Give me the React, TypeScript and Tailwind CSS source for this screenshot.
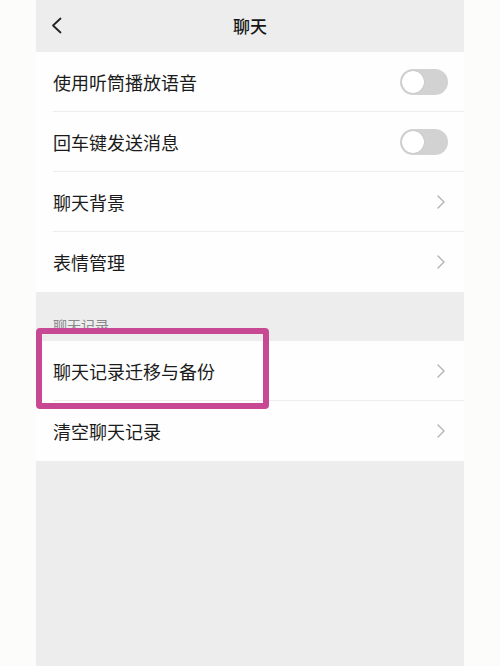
import React from 'react';

const font = { fontFamily: '"Noto Sans CJK SC", "Noto Sans", sans-serif' };

const Toggle: React.FC = () => (
  <div className="w-[48px] h-[26px] rounded-full bg-[#d2d2d2] p-[2px] flex items-center">
    <div className="w-[22px] h-[22px] rounded-full bg-white shadow-[0_0_1px_rgba(0,0,0,0.25)]" />
  </div>
);

const Chevron: React.FC = () => (
  <svg width="8" height="14" viewBox="0 0 8 14" fill="none" className="mr-[19px]">
    <path d="M1 1l6 6-6 6" stroke="#b4b4b4" strokeWidth="1.4" strokeLinecap="round" strokeLinejoin="round" />
  </svg>
);

interface RowProps {
  label: string;
  toggle?: boolean;
  last?: boolean;
}

const Row: React.FC<RowProps> = ({ label, toggle, last }) => (
  <div className="bg-[#fefefe] pl-[17px]">
    <div
      className={`h-[60px] flex items-center justify-between ${last ? '' : 'border-b border-[#ededed]'}`}
    >
      <span className="text-[18px] text-[#1b1b1b] leading-none">{label}</span>
      {toggle ? (
        <div className="mr-[16px]">
          <Toggle />
        </div>
      ) : (
        <Chevron />
      )}
    </div>
  </div>
);

export default function App() {
  return (
    <div className="w-full h-[666px] bg-[#fcfcfa] px-[36px] overflow-hidden" style={font}>
      <div className="relative w-[428px] h-full bg-[#ededed] flex flex-col">
        {/* Header */}
        <div className="h-[52px] flex items-center justify-center relative">
          <svg
            width="11"
            height="17"
            viewBox="0 0 11 17"
            fill="none"
            className="absolute left-[15px] top-[17px]"
          >
            <path d="M9.5 1.5L2 8.5l7.5 7" stroke="#222" strokeWidth="1.8" strokeLinecap="round" strokeLinejoin="round" />
          </svg>
          <span className="text-[17px] font-medium text-[#161616]">聊天</span>
        </div>

        <Row label="使用听筒播放语音" toggle />
        <Row label="回车键发送消息" toggle />
        <Row label="聊天背景" />
        <Row label="表情管理" last />

        <div className="h-[49px] pl-[17px] flex items-end pb-[9px]">
          <span className="text-[14px] text-[#8a8a8a] leading-none">聊天记录</span>
        </div>

        <Row label="聊天记录迁移与备份" />
        <Row label="清空聊天记录" last />

        {/* highlight box */}
        <div className="absolute left-0 top-[328px] w-[233px] h-[81px] border-[6.5px] border-[#c84993] rounded-[4px]" />
      </div>
    </div>
  );
}
